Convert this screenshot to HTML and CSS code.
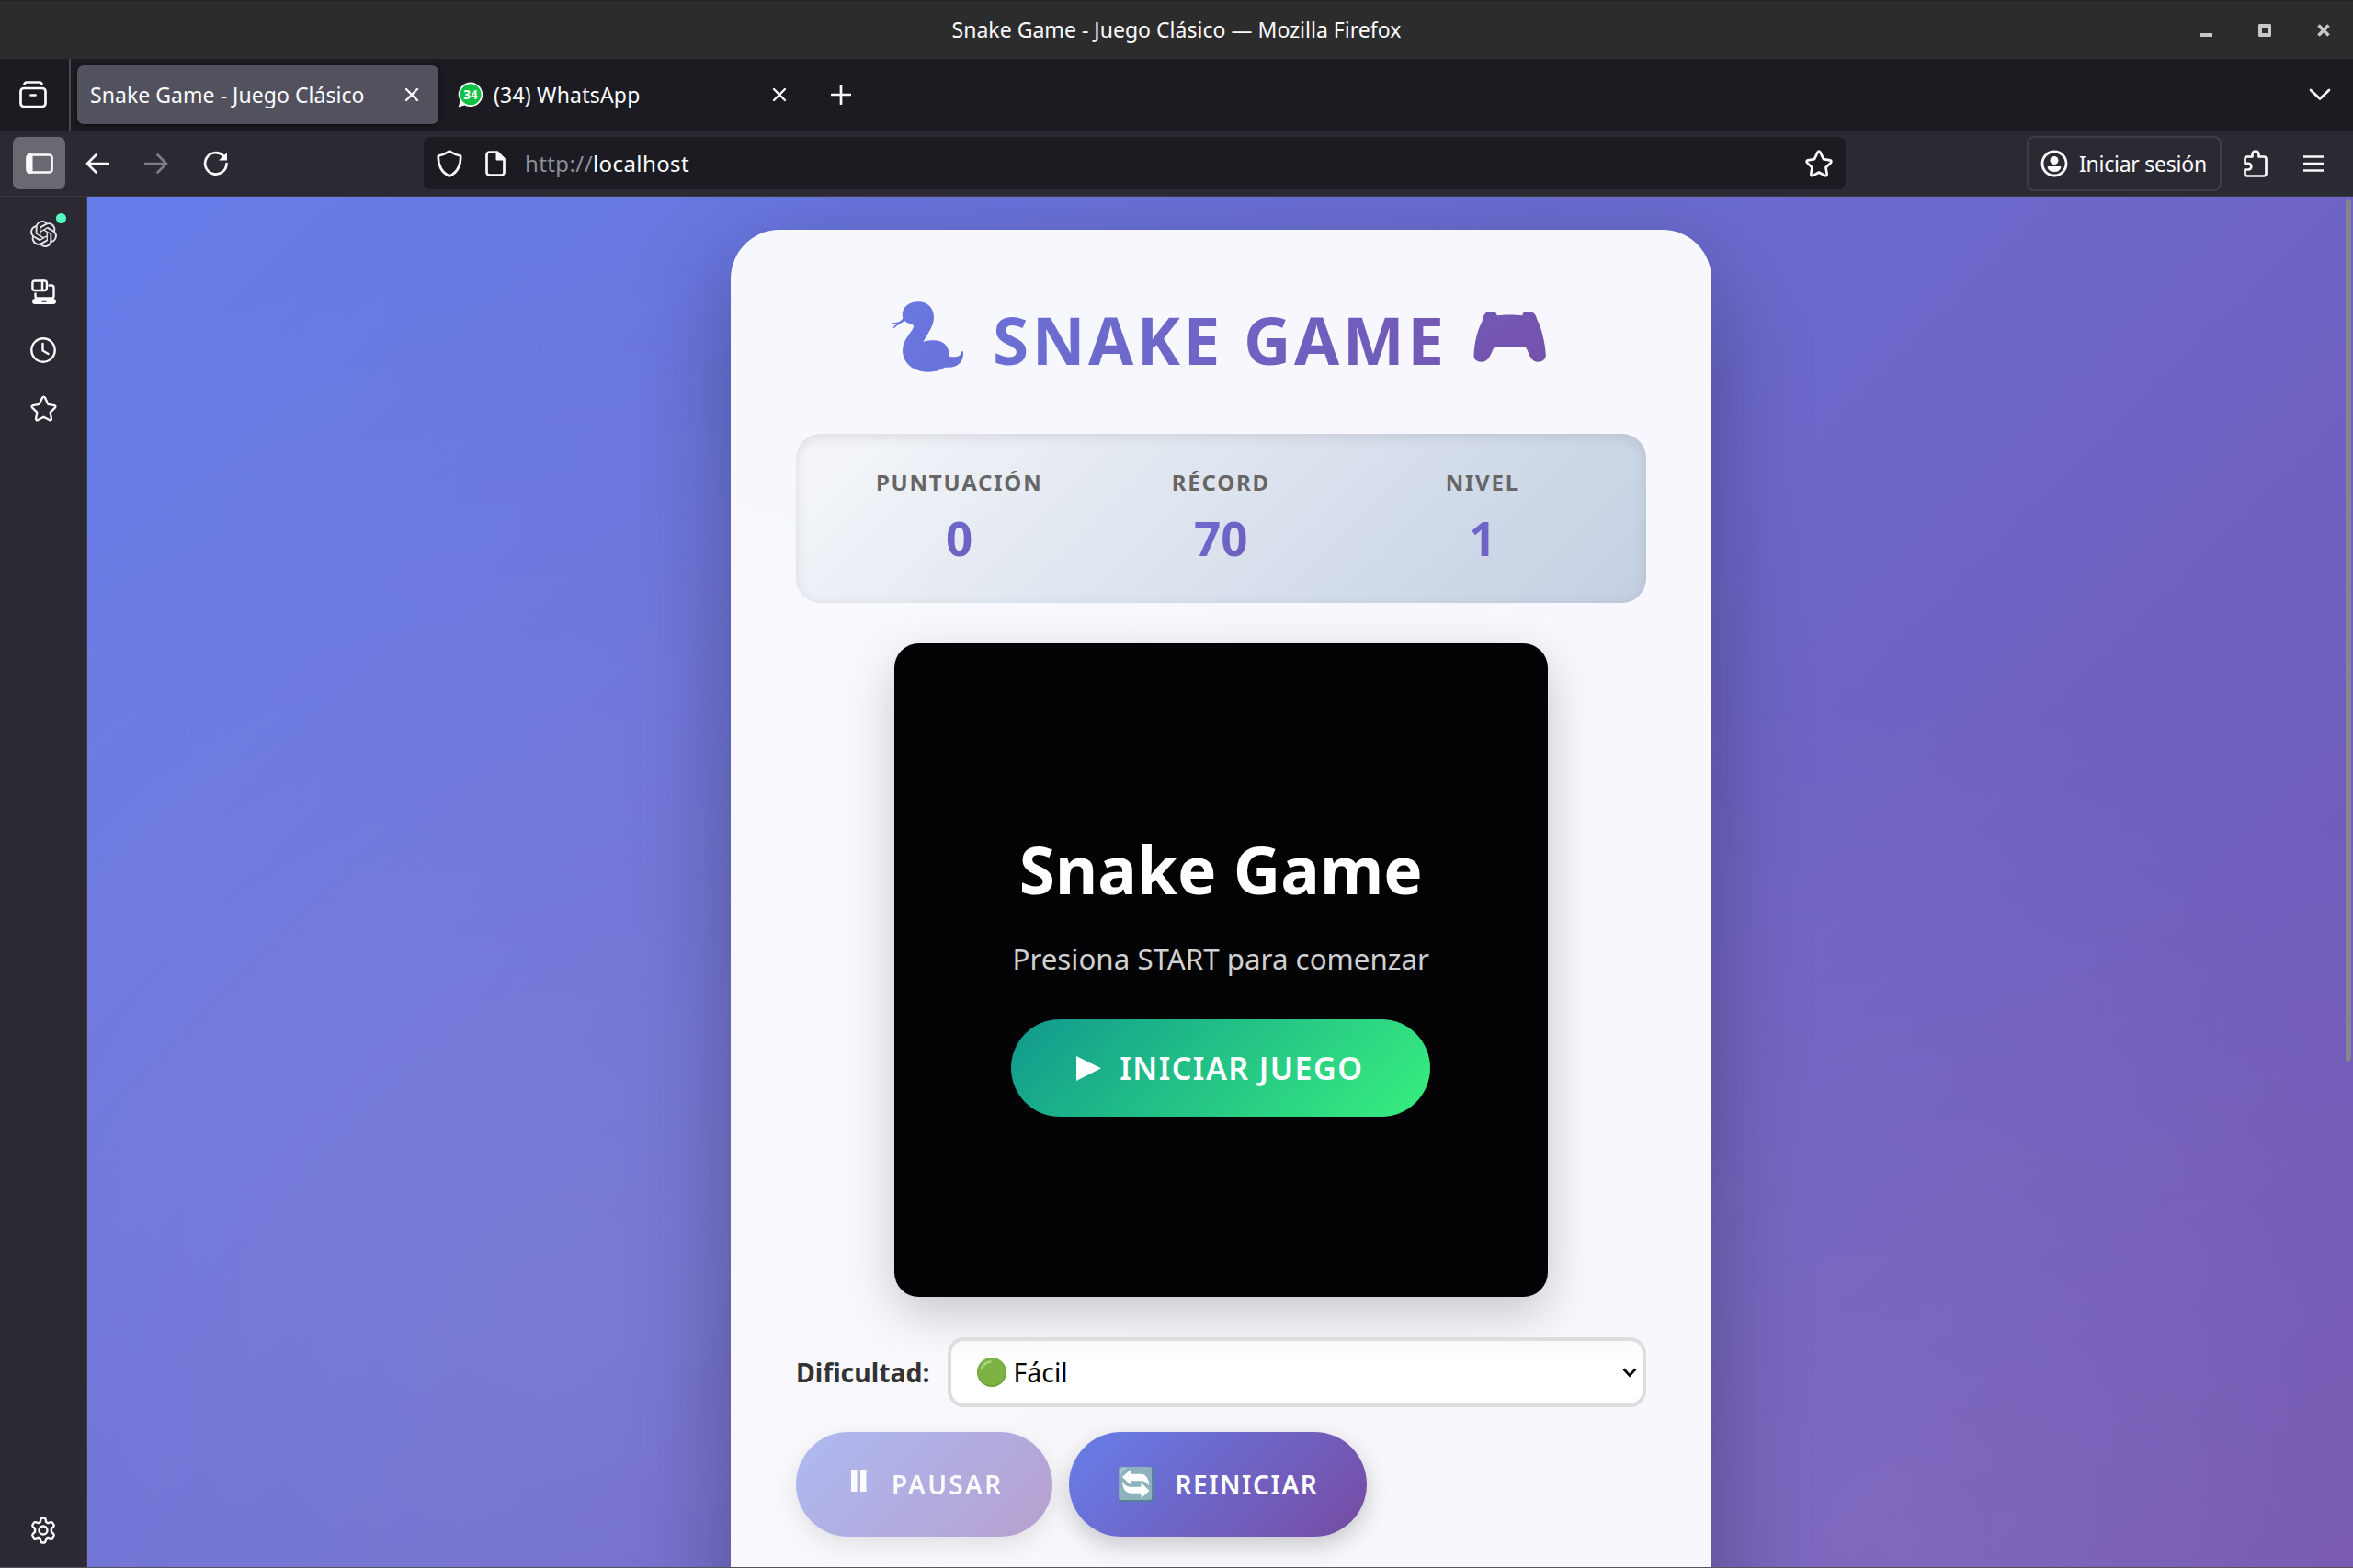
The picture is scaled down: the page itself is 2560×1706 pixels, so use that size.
FILE: index.html
```html
<!DOCTYPE html>
<html lang="es">
<head>
<meta charset="utf-8">
<title>Snake Game - Juego Clásico</title>
<link rel="stylesheet" href="styles.css">
</head>
<body>
<header class="titlebar">
  <span class="titlebar-text">Snake Game - Juego Clásico — Mozilla Firefox</span>
  <div class="window-buttons">
    <svg width="14" height="14" viewBox="0 0 14 14"><rect y="10" width="14" height="4"/></svg>
    <svg width="14" height="14" viewBox="0 0 14 14"><path fill-rule="evenodd" d="M1 0h12l1 1v12l-1 1H1l-1-1V1zM4 5v5h6V5z"/></svg>
    <svg width="14" height="14" viewBox="0 0 14 14"><path d="M1.500 1.500l11 11M12.500 1.500l-11 11" stroke="#c8c8c8" stroke-width="3.600"/></svg>
  </div>
</header>

<nav class="tabbar">
  <div class="tab-history">
    <svg class="line" width="30" height="30" viewBox="0 0 30 30"><path d="M5.500 3.500Q6 1.500 8 1.500h14q2 0 2.500 2"/><rect x="1.500" y="8" width="27" height="20" rx="3.500"/><path d="M12.500 15.500h5"/></svg>
  </div>
  <div class="tab tab-active">
    <span class="tab-label">Snake Game - Juego Clásico</span>
    <svg class="line tab-close" width="16" height="16" viewBox="0 0 16 16"><path d="M2 2l12 12M14 2L2 14"/></svg>
  </div>
  <div class="tab tab-plain">
    <svg class="tab-favicon" width="28" height="28" viewBox="0 0 28 28"><path d="M14 .5a13.300 13.300 0 1 1-6.500 25L.7 27.500l2-6.800A13.300 13.300 0 0 1 14 .5z" fill="#fff"/><circle cx="14" cy="13.800" r="11.500" fill="#0fc144"/><text x="14" y="18.500" text-anchor="middle" class="favicon-count">34</text></svg>
    <span class="tab-label">(34) WhatsApp</span>
    <svg class="line tab-close" width="16" height="16" viewBox="0 0 16 16"><path d="M2 2l12 12M14 2L2 14"/></svg>
  </div>
  <svg class="line new-tab" width="22" height="22" viewBox="0 0 22 22"><path d="M11 1v20M1 11h20"/></svg>
  <svg class="line all-tabs" width="24" height="14" viewBox="0 0 24 14"><path d="M2 2l10 9.500L22 2"/></svg>
</nav>

<div class="toolbar">
  <div class="sidebar-toggle">
    <svg class="line" width="30" height="22" viewBox="0 0 30 22"><rect x="1.500" y="1.500" width="27" height="19" rx="3"/><path d="M4.500 3v16" stroke-width="6"/></svg>
  </div>
  <svg class="line back" width="26" height="22" viewBox="0 0 26 22"><path d="M25 11H2M11.500 1.500L2 11l9.500 9.500"/></svg>
  <svg class="line forward" width="26" height="22" viewBox="0 0 26 22"><path d="M1 11h23M14.500 1.500L24 11l-9.500 9.500"/></svg>
  <svg class="line reload" width="28" height="28" viewBox="0 0 28 28"><path d="M25.500 14A11.700 11.700 0 1 1 22 5.500"/><path d="M26 2v8.500h-9z" fill="#fbfbfe" stroke="none"/></svg>
  <div class="urlbar">
    <svg class="line" width="28" height="30" viewBox="0 0 28 30"><path d="M14 1.500Q20 5.500 26 6.500C27 16 22.500 25 14 28.500 5.500 25 1 16 2 6.500Q8 5.500 14 1.500z"/></svg>
    <svg class="line page-icon" width="22" height="28" viewBox="0 0 22 28"><path d="M4.500 1.500H13L20.500 9v14.500a3 3 0 0 1-3 3h-13a3 3 0 0 1-3-3v-19a3 3 0 0 1 3-3z"/><path d="M12.500 2v7.500H20z" fill="#fbfbfe" stroke-width="2"/></svg>
    <span class="url"><span class="url-scheme">http://</span>localhost</span>
    <svg class="line url-star" width="30" height="30" viewBox="0 0 30 30"><path d="M13.500 2.800q1.500-2.300 3 0l3.500 7.400 7 1.200q2.300.8.800 2.700l-5.300 5.200 1.200 7.300q0 2.300-2.300 1.400L15 24.500l-6.400 3.500q-2.300.9-2.300-1.400l1.200-7.300-5.300-5.200q-1.500-1.900.8-2.700l7-1.200z"/></svg>
  </div>
  <div class="signin">
    <svg width="30" height="30" viewBox="0 0 30 30"><circle cx="15" cy="15" r="13" fill="none" stroke="#fbfbfe" stroke-width="2.800"/><circle cx="15" cy="11.500" r="4.500" fill="#fbfbfe"/><path d="M7.500 18h15q-.8 6-7.500 6t-7.500-6z" fill="#fbfbfe"/></svg>
    <span>Iniciar sesión</span>
  </div>
  <svg class="line puzzle" width="26" height="30" viewBox="0 0 26 30"><path d="M4 7.500h5.500V5a3.500 3.500 0 0 1 7 0v2.500H22a2.500 2.500 0 0 1 2.500 2.500v16a2.500 2.500 0 0 1-2.500 2.500H4A2.500 2.500 0 0 1 1.500 26v-4.500H5a3.300 3.300 0 0 0 0-6.700H1.500V10A2.500 2.500 0 0 1 4 7.500z"/></svg>
  <svg class="line menu" width="22" height="18" viewBox="0 0 22 18"><path d="M0 1.500h22M0 9h22M0 16.500h22"/></svg>
</div>

<div class="workspace">
  <aside class="sidebar">
    <div class="sidebar-item">
      <svg width="29" height="29" viewBox="0 0 24 24" fill="#e4e4e8"><path d="M22.2819 9.8211a5.9847 5.9847 0 0 0-.5157-4.9108 6.0462 6.0462 0 0 0-6.5098-2.9A6.0651 6.0651 0 0 0 4.9807 4.1818a5.9847 5.9847 0 0 0-3.9977 2.9 6.0462 6.0462 0 0 0 .7427 7.0966 5.98 5.98 0 0 0 .511 4.9107 6.051 6.051 0 0 0 6.5146 2.9001A5.9847 5.9847 0 0 0 13.2599 24a6.0557 6.0557 0 0 0 5.7718-4.2058 5.9894 5.9894 0 0 0 3.9977-2.9001 6.0557 6.0557 0 0 0-.7475-7.0729zm-9.022 12.6081a4.4755 4.4755 0 0 1-2.8764-1.0408l.1419-.0804 4.7783-2.7582a.7948.7948 0 0 0 .3927-.6813v-6.7369l2.02 1.1686a.071.071 0 0 1 .038.052v5.5826a4.504 4.504 0 0 1-4.4945 4.4944zm-9.6607-4.1254a4.4708 4.4708 0 0 1-.5346-3.0137l.142.0852 4.783 2.7582a.7712.7712 0 0 0 .7806 0l5.8428-3.3685v2.3324a.0804.0804 0 0 1-.0332.0615L9.74 19.9502a4.4992 4.4992 0 0 1-6.1408-1.6464zM2.3408 7.8956a4.485 4.485 0 0 1 2.3655-1.9728V11.6a.7664.7664 0 0 0 .3879.6765l5.8144 3.3543-2.0201 1.1685a.0757.0757 0 0 1-.071 0l-4.8303-2.7865A4.504 4.504 0 0 1 2.3408 7.872zm16.5963 3.8558L13.1038 8.364 15.1192 7.2a.0757.0757 0 0 1 .071 0l4.8303 2.7913a4.4944 4.4944 0 0 1-.6765 8.1042v-5.6772a.79.79 0 0 0-.407-.667zm2.0107-3.0231l-.142-.0852-4.7735-2.7818a.7759.7759 0 0 0-.7854 0L9.409 9.2297V6.8974a.0662.0662 0 0 1 .0284-.0615l4.8303-2.7866a4.4992 4.4992 0 0 1 6.6802 4.66zM8.3065 12.863l-2.02-1.1638a.0804.0804 0 0 1-.038-.0567V6.0742a4.4992 4.4992 0 0 1 7.3757-3.4537l-.142.0805L8.704 5.459a.7948.7948 0 0 0-.3927.6813zm1.0976-2.3654l2.602-1.4998 2.6069 1.4998v2.9994l-2.5974 1.4997-2.6067-1.4997Z"/></svg>
      <i class="notice-dot"></i>
    </div>
    <div class="sidebar-item">
      <svg class="line" width="28" height="28" viewBox="0 0 28 28"><rect x="2.400" y="1.500" width="15.500" height="10.500" rx="2.500"/><path d="M13 1.500v10.500"/><path d="M20.500 6.500h2.500a2.500 2.500 0 0 1 2.500 2.500v9a2.500 2.500 0 0 1-2.500 2.500H7.500a2 2 0 0 1-2-2v-3"/><path d="M5 21h20a3 3 0 0 1 0 6H5a3 3 0 0 1 0-6zm7.500 1.700v2h5v-2z" fill="#fbfbfe" fill-rule="evenodd" stroke="none"/></svg>
    </div>
    <div class="sidebar-item">
      <svg class="line clock" width="28" height="28" viewBox="0 0 28 28"><circle cx="14" cy="14" r="12.700"/><path d="M13.500 7v7.500l6 3.500"/></svg>
    </div>
    <div class="sidebar-item">
      <svg class="line" width="29" height="29" viewBox="0 0 30 30"><path d="M13.500 2.800q1.500-2.300 3 0l3.500 7.400 7 1.200q2.300.8.800 2.700l-5.300 5.200 1.200 7.300q0 2.300-2.300 1.400L15 24.500l-6.400 3.500q-2.300.9-2.300-1.400l1.200-7.300-5.300-5.200q-1.500-1.900.8-2.700l7-1.200z"/></svg>
    </div>
    <div class="sidebar-item sidebar-settings">
      <svg class="line" width="28" height="30" viewBox="0 0 28 30"><circle cx="14" cy="15" r="4.500"/><path d="M11.500 2.800q.3-1.300 1.500-1.300h2q1.200 0 1.500 1.300l.7 3.200 2 1.200 3.300-1q1.200-.3 1.800.8l1.200 2q.6 1.100-.3 2l-2.300 2.300v3.400l2.300 2.300q.9.900.3 2l-1.200 2q-.6 1.100-1.800.8l-3.300-1-2 1.200-.7 3.200q-.3 1.300-1.500 1.300h-2q-1.200 0-1.500-1.300l-.7-3.200-2-1.200-3.300 1q-1.200.3-1.800-.8l-1.200-2q-.6-1.100.3-2l2.300-2.300v-3.400L2.800 11q-.9-.9-.3-2l1.200-2q.6-1.100 1.800-.8l3.300 1 2-1.200z"/></svg>
    </div>
  </aside>

  <main class="page">
    <section class="card">
      <h1 class="card-title">
        <svg class="snake" width="78" height="77" viewBox="60 52 234 231"><defs><linearGradient id="snakeFill" x1="0" y1="0" x2="1" y2="1"><stop offset="0" stop-color="#6878e2"/><stop offset="1" stop-color="#6a71d7"/></linearGradient></defs><path fill="url(#snakeFill)" d="M95 97C95 70 118 53 147 53 178 53 198 75 198 103 198 130 180 155 163 184 175 180 188 179 200 179 230 179 249 200 249 231 262 234 285 236 288 216 291 212 294 215 294 222 294 250 275 267 245 267 240 268 236 267 233 267 220 277 200 282 178 282 130 282 96 252 96 212 96 175 125 155 132 135 133 130 128 125 120 124 113 123 107 120 103 115 95 120 80 128 68 139 64 140 64 137 70 131L78 126C70 127 60 126 60 123 61 121 75 122 84 119 90 116 95 110 97 107z"/></svg>
        <span class="card-title-text">SNAKE GAME</span>
        <svg class="gamepad" width="79" height="55" viewBox="39 55 236 165"><defs><linearGradient id="padFill" x1="0" y1="0" x2="1" y2="1"><stop offset="0" stop-color="#7258b5"/><stop offset="1" stop-color="#7452ab"/></linearGradient></defs><path fill="url(#padFill)" d="M40 195C42 155 52 115 68 85 72 66 76 56 92 55 110 55 113 58 116 68 140 65 175 65 199 68 200 57 205 55 220 55 236 56 242 64 246 80 262 112 272 155 275 195 276 212 262 220 247 219 222 218 218 180 209 172 180 168 135 168 107 172 98 180 95 215 70 219 50 221 39 212 40 195z"/></svg>
      </h1>

      <div class="stats">
        <div class="stat"><span class="stat-label">PUNTUACIÓN</span><span class="stat-value">0</span></div>
        <div class="stat"><span class="stat-label">RÉCORD</span><span class="stat-value">70</span></div>
        <div class="stat"><span class="stat-label">NIVEL</span><span class="stat-value">1</span></div>
      </div>

      <div class="board">
        <h2 class="board-title">Snake Game</h2>
        <p class="board-hint">Presiona START para comenzar</p>
        <button class="start">
          <svg width="27" height="27" viewBox="0 0 27 27"><path d="M0 0l27 13.300L0 27z" fill="#fff"/></svg>
          <span>INICIAR JUEGO</span>
        </button>
      </div>

      <div class="difficulty">
        <span class="difficulty-label">Dificultad:</span>
        <div class="difficulty-select">
          <svg width="32" height="32" viewBox="0 0 32 32"><circle cx="16" cy="16" r="16" fill="#689f38"/><circle cx="15.700" cy="15.500" r="15" fill="#7cb342"/><path d="M5 12Q7.500 5.500 14.500 4.500" fill="none" stroke="#aed581" stroke-width="2.500" stroke-linecap="round"/></svg>
          <span>Fácil</span>
          <svg class="select-arrow" width="16" height="11" viewBox="0 0 16 11"><path d="M1.500 1.500L8 8.500l6.500-7" fill="none" stroke="#000" stroke-width="2.600"/></svg>
        </div>
      </div>

      <div class="actions">
        <button class="action pause">
          <svg width="17" height="24" viewBox="0 0 17 24"><path d="M0 0h6.500v24H0zM10 0h6.500v24H10z" fill="#fff"/></svg>
          <span>PAUSAR</span>
        </button>
        <button class="action restart">
          <svg width="38" height="38" viewBox="568 435 113 114"><rect x="568" y="435" width="113" height="114" rx="6" fill="#4f8296"/><rect x="568" y="435" width="108" height="108" rx="6" fill="#8eb1be"/><path d="M573 458q2-16 16-18" fill="none" stroke="#b4d0da" stroke-width="5" stroke-linecap="round"/><path fill="#fff" d="M579 468l29-25v15h32c18 0 27 17 27 39-7-11-15-16-27-16h-32v14zM668 513l-27 24v-16h-31c-20 0-30-16-30-39 7 14 17 18 30 18h31v-14z"/></svg>
          <span>REINICIAR</span>
        </button>
      </div>
    </section>
    <div class="scroll-thumb"></div>
  </main>
</div>
</body>
</html>
```
FILE: styles.css
```css
* { box-sizing: border-box; }

body {
  margin: 0;
  width: 2560px;
  height: 1706px;
  display: flex;
  flex-direction: column;
  overflow: hidden;
  background: #2b2a33;
  border-bottom: 1px solid #55545c;
  font-family: "Noto Sans", sans-serif;
  color: #fbfbfe;
}

svg { display: block; flex: none; }
h1, h2, p { margin: 0; }
button { border: 0; font: inherit; color: inherit; }

.line {
  fill: none;
  stroke: #fbfbfe;
  stroke-width: 2.7;
  stroke-linecap: round;
  stroke-linejoin: round;
}

/* Window title */
.titlebar {
  flex: none;
  height: 64px;
  display: grid;
  grid-template-columns: 1fr auto 1fr;
  align-items: center;
  background: #2c2c2c;
  border-top: 1px solid #222;
}
.titlebar-text {
  grid-column: 2;
  padding-bottom: 1px;
  font-size: 23px;
  line-height: 30px;
  letter-spacing: .03px;
  white-space: nowrap;
}
.window-buttons {
  display: flex;
  justify-content: flex-end;
  gap: 50px;
  padding-right: 25px;
  fill: #c8c8c8;
}

/* Tabs */
.tabbar {
  flex: none;
  height: 78px;
  display: flex;
  align-items: center;
  background: #1c1b22;
  font-size: 23px;
  letter-spacing: .05px;
}
.tab-history {
  width: 77px;
  height: 78px;
  padding-left: 21px;
  display: flex;
  align-items: center;
  border-right: 2px solid #4a4950;
}
.tab {
  height: 64px;
  display: flex;
  align-items: center;
  border-radius: 7px;
}
.tab-active {
  width: 393px;
  margin-left: 7px;
  padding: 0 21px 0 14px;
  background: #52525e;
  box-shadow: 0 1px 5px rgba(0, 0, 0, .6);
}
.tab-plain {
  width: 400px;
  padding: 0 21px;
}
.tab-label { white-space: nowrap; }
.tab-plain .tab-label { letter-spacing: .2px; }
.tab-favicon { margin-right: 11px; }
.favicon-count {
  font: 700 13.5px "Noto Sans", sans-serif;
  letter-spacing: 0;
  fill: #fff;
}
.tab-close { margin-left: auto; stroke-width: 2.4; }
.new-tab { margin-left: 27px; }
.all-tabs { margin-left: auto; margin-right: 24px; }

/* Navigation toolbar */
.toolbar {
  flex: none;
  height: 72px;
  display: flex;
  align-items: center;
  padding-left: 14px;
  border-bottom: 1px solid #3a3944;
  font-size: 24px;
}
.sidebar-toggle {
  width: 57px;
  height: 57px;
  display: grid;
  place-items: center;
  background: #6a6972;
  border-radius: 7px;
}
.back { margin-left: 22px; }
.forward { margin-left: 38px; opacity: .4; }
.reload { margin-left: 38px; }
.urlbar {
  width: 1547px;
  height: 57px;
  margin-left: 212px;
  padding: 0 14px;
  display: flex;
  align-items: center;
  background: #1c1b22;
  border-radius: 7px;
}
.page-icon { margin-left: 25px; }
.url { margin-left: 21px; letter-spacing: .4px; }
.url-scheme { color: #8f8f98; }
.url-star { margin-left: auto; }
.signin {
  width: 212px;
  height: 60px;
  margin-left: 197px;
  padding-left: 13px;
  display: flex;
  align-items: center;
  gap: 12px;
  border: 2px solid #3e3d47;
  border-radius: 8px;
  font-size: 23px;
  letter-spacing: -.25px;
  white-space: nowrap;
}
.puzzle { margin-left: 24px; }
.menu { margin-left: 39px; }

/* Sidebar and page */
.workspace {
  flex: 1;
  min-height: 0;
  display: flex;
}
.sidebar {
  width: 95px;
  display: flex;
  flex-direction: column;
  align-items: center;
  gap: 6.3px;
  padding: 12px 0 12px 0;
  border-right: 1px solid #3a3944;
}
.sidebar-item {
  position: relative;
  width: 57px;
  height: 57px;
  display: grid;
  place-items: center;
}
.sidebar-item .line { stroke-width: 2.4; }
.sidebar-settings { margin-top: auto; }
.notice-dot {
  position: absolute;
  right: 4px;
  top: 6px;
  width: 11px;
  height: 11px;
  border-radius: 50%;
  background: #54ffbd;
}

.page {
  position: relative;
  flex: 1;
  display: flex;
  justify-content: center;
  align-items: flex-start;
  padding-top: 35.500px;
  padding-left: 1.500px;
  overflow: hidden;
  background:
    radial-gradient(circle at 20% 80%, rgba(255, 255, 255, .1), transparent 50%) 0 0 / 100% 1492px no-repeat,
    radial-gradient(circle at 80% 98%, rgba(255, 255, 255, .09), transparent 38%) 0 0 / 100% 1492px no-repeat,
    linear-gradient(135deg, #667eea 0%, #764ba2 100%) 0 0 / 100% 2373px no-repeat;
}
.scroll-thumb {
  position: absolute;
  right: 2px;
  top: 3px;
  width: 6px;
  height: 938px;
  border-radius: 3px;
  background: #86848f;
}

/* Game card */
.card {
  flex: none;
  width: 1066.700px;
  height: 2300px;
  padding: 71px;
  display: flex;
  flex-direction: column;
  background: rgba(255, 255, 255, .95);
  border-radius: 53.300px;
  box-shadow: 0 36px 107px rgba(0, 0, 0, .3);
}
.card-title {
  height: 97px;
  display: flex;
  align-items: flex-start;
  padding-left: 104px;
  font-size: 71.100px;
  line-height: 97px;
  white-space: nowrap;
}
.card-title-text {
  margin-left: 32px;
  letter-spacing: 3.560px;
  background: linear-gradient(100deg, #6b70d5 0%, #7258b4 100%);
  -webkit-background-clip: text;
  background-clip: text;
  color: transparent;
}
.snake { margin-top: 7px; }
.gamepad { margin-top: 18px; margin-left: 28px; }

.stats {
  flex: none;
  height: 184px;
  margin-top: 54px;
  padding: 35.500px;
  display: grid;
  grid-template-columns: repeat(3, 1fr);
  border-radius: 26.700px;
  background: linear-gradient(135deg, #f5f7fa 0%, #c3cfe2 100%);
  box-shadow: inset 0 3.500px 14px rgba(0, 0, 0, .1);
}
.stat {
  display: flex;
  flex-direction: column;
  text-align: center;
}
.stat-label {
  font-size: 24px;
  line-height: 35px;
  font-weight: 700;
  letter-spacing: 1.780px;
  color: #666;
}
.stat-value {
  margin-top: 8px;
  font-size: 51.200px;
  line-height: 70px;
  font-weight: 700;
  background: linear-gradient(135deg, #667eea, #764ba2);
  -webkit-background-clip: text;
  background-clip: text;
  color: transparent;
}

.board {
  flex: none;
  align-self: center;
  width: 711px;
  height: 711px;
  margin-top: 44.400px;
  padding-top: 2px;
  display: flex;
  flex-direction: column;
  align-items: center;
  justify-content: center;
  border-radius: 26.700px;
  background: #030305;
  box-shadow: 0 18px 53px rgba(0, 0, 0, .2);
}
.board-title {
  font-size: 71.100px;
  line-height: 97px;
  color: #fff;
}
.board-hint {
  margin-top: 26.700px;
  font-size: 31.300px;
  line-height: 44px;
  color: #d0d0d0;
}
.start {
  width: 456px;
  height: 106px;
  margin-top: 44.400px;
  padding: 0 0 0 71px;
  display: flex;
  align-items: center;
  gap: 20px;
  border-radius: 53px;
  background: linear-gradient(135deg, #11998e, #38ef7d);
  font-size: 34px;
  font-weight: 600;
  letter-spacing: 1.450px;
  white-space: nowrap;
  color: #fff;
}

.difficulty {
  flex: none;
  height: 76.500px;
  margin-top: 44px;
  display: flex;
  align-items: center;
  justify-content: space-between;
  font-size: 28.400px;
}
.difficulty-label {
  font-weight: 700;
  color: #333;
}
.difficulty-select {
  width: 760px;
  height: 76.500px;
  padding: 0 6px 0 28px;
  display: flex;
  align-items: center;
  gap: 8px;
  border: 4px solid #ddd;
  border-radius: 17.800px;
  background: linear-gradient(#f9f9f9, #fff 35%);
  color: #000;
}
.select-arrow { margin-left: auto; }

.actions {
  flex: none;
  display: flex;
  gap: 18px;
  margin-top: 26.700px;
  font-size: 28px;
  font-weight: 600;
}
.action {
  height: 113.500px;
  padding: 0;
  display: flex;
  align-items: center;
  border-radius: 57px;
  background: linear-gradient(135deg, #667eea, #764ba2);
  box-shadow: 0 9px 27px rgba(0, 0, 0, .2);
  letter-spacing: 1.780px;
  white-space: nowrap;
  color: #fff;
}
.pause {
  width: 279.500px;
  padding-left: 60px;
  gap: 27px;
  letter-spacing: 2.300px;
  opacity: .5;
}
.pause svg { margin-bottom: 8px; }
.restart {
  width: 323.500px;
  padding-left: 54px;
  gap: 23px;
  letter-spacing: 1.600px;
}
```
